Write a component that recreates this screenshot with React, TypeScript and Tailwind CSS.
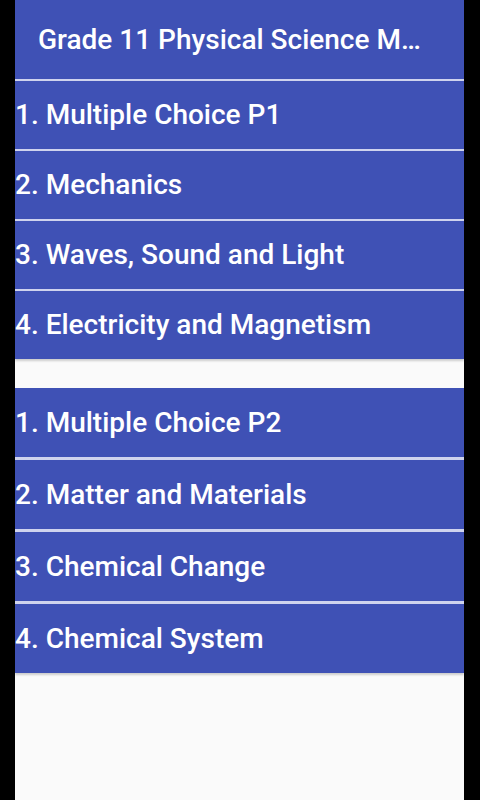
const groups = [
  ['1. Multiple Choice P1', '2. Mechanics', '3. Waves, Sound and Light', '4. Electricity and Magnetism'],
  ['1. Multiple Choice P2', '2. Matter and Materials', '3. Chemical Change', '4. Chemical System'],
]

export default function App() {
  return (
    <div className="flex h-[800px] w-[480px] bg-black font-['Roboto',sans-serif]">
      <div className="ml-[15px] flex w-[449px] flex-col bg-[#fafafa]">
        <div className="flex h-[79px] shrink-0 items-center bg-[#3f51b5] pl-[23px]">
          <h1 className="text-[28px] font-medium text-white">Grade 11 Physical Science M…</h1>
        </div>
        {groups.map((items, g) => (
          <div
            key={g}
            className={`flex flex-col bg-[#cfd3ee] shadow-[0_2px_2px_rgba(0,0,0,0.18)] ${g === 0 ? 'gap-[2px] pt-[2px]' : 'mt-[29px] gap-[3px]'}`}
          >
            {items.map((label) => (
              <div
                key={label}
                className={`flex items-center bg-[#3f51b5] text-[28px] font-medium text-white ${g === 0 ? 'h-[68px]' : 'h-[69px]'}`}
              >
                {label}
              </div>
            ))}
          </div>
        ))}
      </div>
    </div>
  )
}
